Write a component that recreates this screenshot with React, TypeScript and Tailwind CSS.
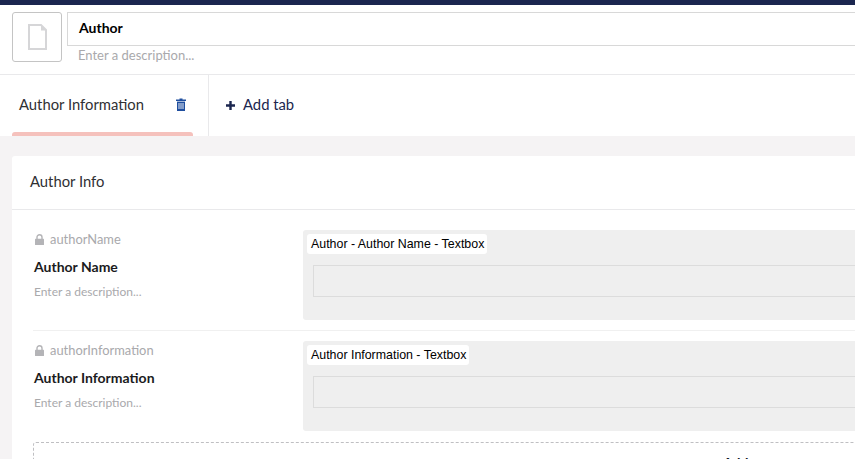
const LATO = "font-['Lato',sans-serif]"

function LockIcon() {
  return (
    <svg width="9" height="11" viewBox="0 0 9 11" className="mr-[6px] ml-[1px] mb-[2px] shrink-0">
      <path d="M2 5V3.2a2.5 2.5 0 0 1 5 0V5" fill="none" stroke="#b4b4b7" strokeWidth="1.4" />
      <rect x="0" y="4.8" width="9" height="6.2" rx="0.6" fill="#b4b4b7" />
    </svg>
  )
}

function TrashIcon() {
  return (
    <svg width="10" height="13" viewBox="0 0 10 13">
      <path d="M3.5 1.5V.5h3v1H10v1.4H0V1.5Z" fill="#1f4e9e" />
      <path d="M1 3.6h8V13H1Z" fill="#1f4e9e" />
      <path d="M3 5v6M5 5v6M7 5v6" stroke="#fff" strokeWidth="0.9" />
    </svg>
  )
}

function PropertyRow({ alias, name, editor, last }: { alias: string; name: string; editor: string; last?: boolean }) {
  return (
    <div className={`flex ${last ? "" : "border-b border-[#f0f0f0] pb-[10px] mb-[10px]"}`}>
      <div className="w-[270px] shrink-0 pl-[1px]">
        <div className="flex items-center h-[20px] text-[12.9px] text-[#a9a9ac]">
          <LockIcon />
          <span>{alias}</span>
        </div>
        <div className="mt-[7px] text-[14px] leading-[20px] font-bold text-[#1b1b1d]">{name}</div>
        <div className="mt-[6px] text-[12px] leading-[18px] text-[#a9a9ac]">Enter a description...</div>
      </div>
      <div className="flex-1 h-[90px] bg-[#efefef] rounded-[3px] pt-[4px] pl-[4px] pr-[10px]">
        <div className="w-fit h-[20px] pl-[4px] pr-[3px] bg-white rounded-[3px] text-[12.4px] leading-[20px] font-['Liberation_Sans',sans-serif] text-black">{editor}</div>
        <div className="mt-[11px] ml-[6px] h-[32px] border border-[#dcdcdc]" />
      </div>
    </div>
  )
}

export default function App() {
  return (
    <div className={`w-[855px] h-[459px] overflow-hidden bg-[#f5f3f4] ${LATO}`}>
      <div className="w-[1440px]">
        <div className="h-[5px] bg-[#1b264f]" />

        <div className="h-[70px] bg-white border-b border-[#e9e9eb] flex pt-[7px] pl-[12px]">
          <div className="w-[50px] h-[50px] border border-[#c4c4c4] rounded-[3px] flex items-center justify-center">
            <svg width="19" height="26" viewBox="0 0 19 26" fill="none">
              <path d="M1 1H13L18 6V25H1Z" fill="#fff" stroke="#d6d6d8" strokeWidth="2" />
              <path d="M13 1L18.5 6.5H13Z" fill="#d6d6d8" />
            </svg>
          </div>
          <div className="flex-1 ml-[5px]">
            <div className="h-[34px] border border-[#d8d8d8] pl-[11px] text-[14px] leading-[30px] font-bold text-black">Author</div>
            <div className="pl-[11px] text-[13px] leading-[18px] text-[#a9a9ac]">Enter a description...</div>
          </div>
        </div>

        <div className="h-[61px] bg-white flex">
          <div className="w-[209px] h-full border-r border-[#e9e9eb] pl-[12px] flex flex-col">
            <div className="w-[181px] flex-1 flex items-center justify-between pl-[7px] pr-[7px] pt-[2px]">
              <span className="text-[14.8px] text-[#303033]">Author Information</span>
              <TrashIcon />
            </div>
            <div className="w-[181px] h-[4px] bg-[#f5c1bc] rounded-t-[3px]" />
          </div>
          <div className="flex items-center pl-[16px] pb-[2px] text-[14.8px] text-[#1b264f]">
            <svg width="11" height="11" viewBox="0 0 11 11" className="mr-[7px] mt-[2px]">
              <path d="M5.5 1v9M1 5.5h9" stroke="#1b264f" strokeWidth="2.4" />
            </svg>
            <span>Add tab</span>
          </div>
        </div>

        <div className="mt-[20px] ml-[12px] bg-white rounded-[3px]">
          <div className="h-[54px] border-b border-[#e9e9eb] pl-[18px] pb-[2px] flex items-center text-[14.8px] text-[#303033]">Author Info</div>
          <div className="pt-[20px] pl-[21px] pr-[20px]">
            <PropertyRow alias="authorName" name="Author Name" editor="Author - Author Name - Textbox" />
            <PropertyRow alias="authorInformation" name="Author Information" editor="Author Information - Textbox" last />
            <div className="mt-[11px] h-[60px] border border-dashed border-[#bfbfc2] rounded-[3px] pt-[9px] pl-[76px] text-center text-[14px] font-bold text-[#111827]">Add property</div>
          </div>
        </div>
      </div>
    </div>
  )
}
